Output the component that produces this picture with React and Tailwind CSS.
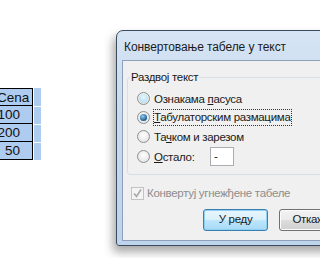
import React from "react";

function Radio({ checked, hover }) {
  return (
    <span className="relative inline-flex h-[13px] w-[13px] shrink-0 items-center justify-center rounded-full border border-[#8e8f8f] bg-[radial-gradient(circle_at_50%_40%,#ffffff,#dcdcdc)]">
      {hover && (
        <span className="absolute inset-[1px] rounded-full bg-[radial-gradient(circle_at_50%_35%,#e8f6fd,#a7d8f4)]" />
      )}
      {checked && (
        <span className="absolute h-[7px] w-[7px] rounded-full bg-[radial-gradient(circle_at_40%_35%,#8fd0f5,#1b5a8e_70%)]" />
      )}
    </span>
  );
}

export default function App() {
  const font = { fontFamily: '"Liberation Sans", "Noto Sans", sans-serif' };
  const rows = [
    { t: "Cena", cls: "left-[-3px]" },
    { t: "100", cls: "right-[12px]" },
    { t: "200", cls: "right-[12px]" },
    { t: "50", cls: "right-[12px]" },
  ];
  return (
    <div className="relative h-[258px] w-[320px] overflow-hidden bg-white" style={font}>
      {/* table fragment */}
      <div className="flex flex-col pt-[88px]">
        {rows.map((r, i) => (
          <div key={i} className="flex h-[18px]">
            <div
              className={`relative h-[18px] w-[33px] overflow-hidden border-r border-b border-[#000] bg-[#aecbf0] ${
                i === 0 ? "border-t" : ""
              }`}
            >
              <span className={`absolute top-[0px] whitespace-nowrap text-[13.5px] leading-[17px] text-[#111] ${r.cls}`}>
                {r.t}
              </span>
            </div>
            <div className={`ml-[1px] w-[7px] bg-[#aecbf0] ${i === 0 ? "" : "mt-[1px]"}`} />
          </div>
        ))}
      </div>

      {/* dialog */}
      <div className="absolute left-[116px] top-[30px] h-[216px] w-[230px] rounded-tl-[7px] rounded-bl-[3px] border border-[#3b4a5c] bg-[linear-gradient(180deg,#d6e4f4_0%,#c8daef_40%,#bed3ec_100%)] shadow-[-3px_6px_10px_rgba(0,0,0,0.35)]">
        {/* title bar */}
        <div className="flex h-[29px] items-start">
          <div className="pl-[7px] pt-[9px] text-[12px] leading-[15px] tracking-[-0.1px] text-[#1c1c1c]">
            Конвертовање табеле у текст
          </div>
          <div className="ml-auto mr-[-20px] mt-[2px] flex h-[18px] w-[44px] items-center justify-start rounded-[3px] border border-[#6c7a8c] bg-[linear-gradient(180deg,#f0f4f9_0%,#dde6ef_50%,#c9d4e0_51%,#d5dfe9_100%)] pl-[10px]">
            <span className="text-[13px] font-bold leading-none text-[#3a3a3a]" style={{ fontFamily: '"DejaVu Sans", sans-serif' }}>?</span>
          </div>
        </div>
        {/* client area */}
        <div className="ml-[5px] h-[181px] border border-[#8da2ba] bg-[#f0f0f0] text-[11.5px] tracking-[-0.3px] text-[#1a1a1a]">
          {/* group box */}
          <div className="relative ml-[4px] mt-[16px] h-[98px] w-[300px] rounded-[3px] border border-[#d5dfe5]">
            <div className="absolute left-[2px] top-[-10px] bg-[#f0f0f0] px-[1px] leading-[18px]">Раздвој текст</div>
            <div className="flex flex-col pl-[9px] pt-[11px]">
              <div className="flex h-[19px] items-center gap-[4px]">
                <Radio hover />
                <span className="leading-[16px]">Ознакама <span className="underline">п</span>асуса</span>
              </div>
              <div className="flex h-[19px] items-center gap-[3px]">
                <Radio checked />
                <span className="border border-dotted border-[#333] leading-[15px]">
                  <span className="underline">Т</span>абулаторским размацима
                </span>
              </div>
              <div className="flex h-[19px] items-center gap-[4px]">
                <Radio />
                <span className="leading-[16px]">Та<span className="underline">ч</span>ком и зарезом</span>
              </div>
              <div className="flex h-[21px] items-center gap-[4px]">
                <Radio />
                <span className="w-[52px] leading-[16px]"><span className="underline">О</span>стало:</span>
                <div className="flex h-[19px] w-[24px] items-center border border-[#abadb3] bg-white pl-[3px] leading-none">-</div>
              </div>
            </div>
          </div>
          {/* checkbox */}
          <div className="ml-[8px] mt-[10px] flex items-center gap-[3px] text-[#8d8d8d]">
            <span className="flex h-[13px] w-[13px] items-center justify-center border border-[#c2c2c2] bg-[#f4f4f4]">
              <svg width="11" height="11" viewBox="0 0 11 11">
                <path d="M2 5.5 L4.5 8.5 L9 1.5" fill="none" stroke="#a8a8a8" strokeWidth="1.6" />
              </svg>
            </span>
            <span className="leading-[16px]">Конвертуј угнежђене табеле</span>
          </div>
          {/* buttons */}
          <div className="ml-[80px] mt-[8px] flex gap-[11px]">
            <div className="flex h-[22px] w-[73px] items-center justify-center rounded-[3px] border border-[#3c7fb1] bg-[linear-gradient(180deg,#eaf6fd_0%,#d9f0fc_50%,#bee6fd_51%,#a7d9f5_100%)] shadow-[inset_0_0_0_1px_#8ed0f2]">
              У реду
            </div>
            <div className="flex h-[22px] w-[73px] items-center justify-center rounded-[3px] border border-[#707070] bg-[linear-gradient(180deg,#f2f2f2_0%,#ebebeb_50%,#dddddd_51%,#cfcfcf_100%)] shadow-[inset_0_0_0_1px_#fcfcfc]">
              Откажи
            </div>
          </div>
        </div>
      </div>
    </div>
  );
}
